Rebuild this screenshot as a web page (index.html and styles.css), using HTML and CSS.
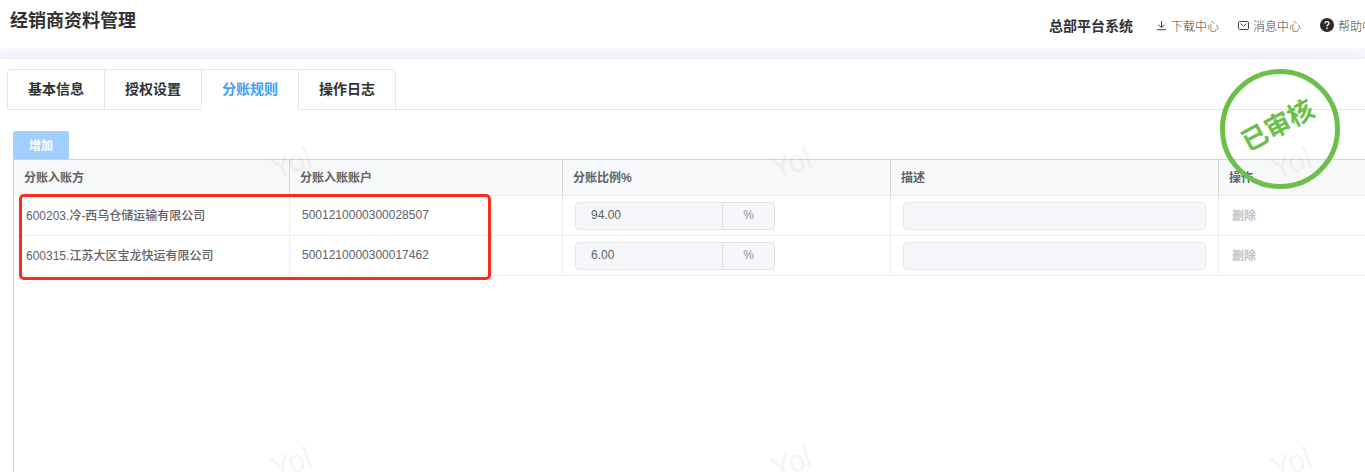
FILE: index.html
```html
<!DOCTYPE html>
<html lang="zh-CN">
<head>
    <meta charset="UTF-8">
    <meta name="viewport" content="width=device-width, initial-scale=1.0">
    <title>经销商资料管理</title>

    <link rel="stylesheet" href="styles.css">
</head>
<body>
    <header class="header">
        <h1 class="title">经销商资料管理</h1>
        <nav class="menu">
            <strong class="system">总部平台系统</strong>
            <a class="menu-link" href="#">
                <svg class="icon" width="11" height="11" viewBox="0 0 11 11" fill="none" stroke="#444" stroke-width="1">
                    <path d="M5.5 1v6.5M2.5 4.7l3 3 3-3M1 9.7h9"/>
                </svg>
                下载中心
            </a>
            <a class="menu-link" href="#">
                <svg class="icon" width="11" height="11" viewBox="0 0 11 11" fill="none" stroke="#444" stroke-width="1">
                    <rect x="0.5" y="1.5" width="10" height="8" rx="1"/>
                    <path d="M2.5 3.5l3 2.7 3-2.7"/>
                </svg>
                消息中心
            </a>
            <a class="menu-link" href="#">
                <svg class="icon" width="14" height="14" viewBox="0 0 14 14" fill="none">
                    <circle cx="7" cy="7" r="7" fill="#2b2b2b"/>
                    <path d="M5 5.5c0-2.6 4-2.6 4 0C9 6.9 7 6.8 7 8.4" stroke="#fff" stroke-width="1.3"/>
                    <circle cx="7" cy="10.4" r="0.8" fill="#fff"/>
                </svg>
                帮助中心
            </a>
        </nav>
    </header>

    <main class="main">
        <section class="card">
            <div class="tabs">
                <div class="tabs-nav" role="tablist">
                    <button class="tab" role="tab">基本信息</button>
                    <button class="tab" role="tab">授权设置</button>
                    <button class="tab active" role="tab" aria-selected="true">分账规则</button>
                    <button class="tab" role="tab">操作日志</button>
                </div>
            </div>

            <div class="content">
                <button class="btn-add" disabled>增加</button>

                <div class="table-box">
                    <table class="table">
                        <colgroup>
                            <col class="col-party">
                            <col class="col-account">
                            <col class="col-wide">
                            <col class="col-wide">
                            <col>
                        </colgroup>
                        <thead>
                            <tr>
                                <th>分账入账方</th>
                                <th>分账入账账户</th>
                                <th>分账比例%</th>
                                <th>描述</th>
                                <th>操作</th>
                            </tr>
                        </thead>
                        <tbody>
                            <tr>
                                <td class="text">600203.冷-西乌仓储运输有限公司</td>
                                <td class="text">5001210000300028507</td>
                                <td>
                                    <div class="input-group">
                                        <input class="input" type="text" value="94.00" aria-label="分账比例%" disabled>
                                        <span class="append">%</span>
                                    </div>
                                </td>
                                <td><input class="input" type="text" aria-label="描述" disabled></td>
                                <td class="text"><button class="btn-del" disabled>删除</button></td>
                            </tr>
                            <tr>
                                <td class="text">600315.江苏大区宝龙快运有限公司</td>
                                <td class="text">5001210000300017462</td>
                                <td>
                                    <div class="input-group">
                                        <input class="input" type="text" value="6.00" aria-label="分账比例%" disabled>
                                        <span class="append">%</span>
                                    </div>
                                </td>
                                <td><input class="input" type="text" aria-label="描述" disabled></td>
                                <td class="text"><button class="btn-del" disabled>删除</button></td>
                            </tr>
                        </tbody>
                    </table>
                    <div class="highlight"></div>
                </div>
            </div>

            <div class="stamp"><span class="stamp-text">已审核</span></div>
        </section>
    </main>

    <div class="watermark" aria-hidden="true">
        <span class="mark">Yol</span>
        <span class="mark">Yol</span>
        <span class="mark">Yol</span>
        <span class="mark">Yol</span>
        <span class="mark">Yol</span>
        <span class="mark">Yol</span>
    </div>
</body>
</html>
```

FILE: styles.css
```css
*{
    box-sizing: border-box;
}

body{
    margin: 0;
    min-height: 100vh;
    display: flex;
    flex-direction: column;
    overflow: hidden;
    background: #f5f7fa;
    color: #606266;
    font-family: "Liberation Sans", "Noto Sans CJK SC", sans-serif;
    font-size: 12px;
    font-weight: 500;
}

button, input{
    font-family: inherit;
    font-size: 12px;
    font-weight: 500;
}

/* header */
.header{
    position: relative;
    z-index: 1;
    height: 48px;
    padding-left: 10px;
    display: flex;
    justify-content: space-between;
    background: #fff;
}

.title{
    margin: 0;
    font-size: 18px;
    font-weight: 600;
    line-height: 42px;
    color: #303133;
}

.menu{
    margin-right: -21px;
    display: flex;
    flex-shrink: 0;
    align-items: center;
    gap: 19px;
    padding-top: 2px;
}

.system{
    margin-right: 4px;
    font-size: 14px;
    font-weight: 700;
    color: #303133;
}

.menu-link{
    display: flex;
    align-items: center;
    gap: 4px;
    font-weight: 300;
    color: #444;
    text-decoration: none;
    white-space: nowrap;
}

/* card */
.main{
    flex: 1;
    display: flex;
    padding-top: 11px;
}

.card{
    position: relative;
    flex: 1;
    min-width: 0;
    padding: 10px 0 0 7px;
    background: #fff;
    box-shadow: 0 2px 12px rgba(0, 0, 0, 0.1);
    display: flex;
    flex-direction: column;
}

.tabs{
    display: flex;
    border-bottom: 1px solid #e4e7ed;
}

.tabs-nav{
    display: flex;
    margin-bottom: -1px;
    border: 1px solid #e4e7ed;
    border-bottom: none;
    border-radius: 4px 4px 0 0;
}

.tab{
    height: 40px;
    padding: 0 20px 3px;
    border: none;
    border-bottom: 1px solid #e4e7ed;
    background: none;
    font-size: 14px;
    font-weight: 600;
    color: #303133;
}

.tab + .tab{
    border-left: 1px solid #e4e7ed;
}

.tab.active{
    border-bottom-color: #fff;
    color: #409eff;
}

.content{
    flex: 1;
    display: flex;
    flex-direction: column;
    align-items: flex-start;
    padding: 21px 0 0 6px;
}

.btn-add{
    height: 28px;
    padding: 0 16px 2px;
    border: none;
    border-radius: 3px 3px 0 0;
    background: #a0cfff;
    font-weight: 700;
    color: #fff;
}

/* table */
.table-box{
    position: relative;
    flex: 1;
    width: 100%;
    border-top: 1px solid #d3d3d3;
    border-left: 1px solid #d3d3d3;
}

.table{
    width: 100%;
    table-layout: fixed;
    border-collapse: separate;
    border-spacing: 0;
}

.col-party{
    width: 276px;
}

.col-account{
    width: 273px;
}

.col-wide{
    width: 328px;
}

.table th{
    height: 36px;
    padding: 0 10px 2px;
    border-right: 1px solid #d3d3d3;
    border-bottom: 1px solid #ebeef5;
    background: #f7f8fa;
    font-weight: 600;
    text-align: left;
}

.table td{
    height: 40px;
    padding: 0 12px;
    border-right: 1px solid #ebeef5;
    border-bottom: 1px solid #ebeef5;
}

.table td.text{
    padding-bottom: 2px;
}

.table th:last-child, .table td:last-child{
    border-right: none;
}

.input-group{
    display: flex;
    width: 200px;
}

.input{
    display: block;
    width: 100%;
    min-width: 0;
    height: 28px;
    padding: 0 15px 2px;
    border: 1px solid #e4e7ed;
    border-radius: 4px;
    background: #f5f7fa;
    color: #606266;
}

.input-group .input{
    border-right: none;
    border-radius: 4px 0 0 4px;
}

.append{
    padding: 0 20px;
    border: 1px solid #dcdfe6;
    border-radius: 0 4px 4px 0;
    background: #f5f7fa;
    line-height: 24px;
    color: #909399;
}

.btn-del{
    padding: 0 1px;
    border: none;
    background: none;
    font-weight: 600;
    color: #c0c4cc;
}

.highlight{
    position: absolute;
    top: 34px;
    left: 5px;
    width: 472px;
    height: 86px;
    border: 3px solid #fb2a20;
    border-radius: 5px;
}

/* approval stamp */
.stamp{
    position: absolute;
    top: 10px;
    right: 25px;
    width: 120px;
    height: 120px;
    display: flex;
    align-items: center;
    justify-content: center;
    border: 5px solid #6cc04a;
    border-radius: 50%;
}

.stamp-text{
    padding-bottom: 14px;
    font-size: 26px;
    font-weight: 700;
    color: #6cc04a;
    transform: rotate(-28deg);
}

/* watermark */
.watermark{
    position: fixed;
    inset: 0;
    padding: 13px 0 0 41px;
    display: grid;
    grid-template-columns: repeat(3, 500px);
    grid-auto-rows: 300px;
    place-items: center;
    overflow: hidden;
    pointer-events: none;
    z-index: 2;
}

.mark{
    font-size: 30px;
    color: rgba(0, 0, 0, 0.04);
    -webkit-text-stroke: 1px rgba(0, 0, 0, 0.02);
    transform: rotate(-20deg);
}
```
